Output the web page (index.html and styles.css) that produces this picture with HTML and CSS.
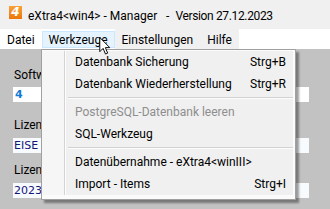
FILE: index.html
```html
<!DOCTYPE html>
<html lang="de">
<head>
<meta charset="utf-8">
<title>eXtra4 Manager</title>
<link rel="stylesheet" href="styles.css">
</head>
<body>
<div class="window">
  <div class="titlebar">
    <span class="logo">4</span>
    <span class="title">eXtra4&lt;win4&gt; - Manager   -  <span class="ver">Version 27.12.2023</span></span>
  </div>
  <div class="menubar">
    <div class="mb-item">Datei</div>
    <div class="mb-item active">Werkzeuge</div>
    <div class="mb-group">
      <div class="mb-item">Einstellungen</div>
      <div class="mb-item">Hilfe</div>
    </div>
  </div>
  <div class="main">
    <div class="label l1">Software</div>
    <div class="field f1"><span class="val-blue">4</span></div>
    <div class="label l2">Lizenz</div>
    <div class="field f2"><span class="val-navy">EISE</span></div>
    <div class="label l3">Lizenz</div>
    <div class="field f3"><span class="val-navy">2023</span></div>
  </div>
  <div class="dropdown">
    <div class="dd-body">
      <div class="dd-item"><span>Datenbank Sicherung</span><span>Strg+B</span></div>
      <div class="dd-item"><span>Datenbank Wiederherstellung</span><span>Strg+R</span></div>
      <div class="dd-sep"></div>
      <div class="dd-item disabled"><span>PostgreSQL-Datenbank leeren</span></div>
      <div class="dd-item"><span>SQL-Werkzeug</span></div>
      <div class="dd-sep"></div>
      <div class="dd-item"><span>Datenübernahme - eXtra4&lt;winIII&gt;</span></div>
      <div class="dd-item"><span>Import - Items</span><span>Strg+I</span></div>
    </div>
  </div>
  <svg class="cursor" viewBox="0 0 12 19" width="12" height="18">
    <path d="M0.5 0.5 L0.5 15.5 L4 12 L6.5 18 L8.8 17 L6.4 11.2 L11 11.2 Z" fill="#fff" stroke="#000" stroke-width="1" stroke-linejoin="miter"/>
  </svg>
</div>
</body>
</html>
```
FILE: styles.css
```css
html, body {
  margin: 0;
  padding: 0;
}
body {
  font-family: Roboto, "Noto Sans", sans-serif;
  font-size: 12px;
  color: #000;
}
.window {
  position: relative;
  width: 330px;
  height: 209px;
  overflow: hidden;
  background: #c2c2c2;
}
.titlebar {
  height: 29px;
  box-sizing: border-box;
  padding: 2px 0 0 9px;
  display: flex;
  align-items: center;
  background: #f0f0f0;
}
.logo {
  align-self: flex-start;
  margin-top: 4px;
  width: 13px;
  height: 13px;
  background: linear-gradient(#f8a23a, #ec7608);
  color: #fff;
  font: italic bold 12px/13px "DejaVu Sans", sans-serif;
  text-align: center;
}
.title {
  margin-left: 6px;
  white-space: pre;
  line-height: 14px;
}
.ver {
  letter-spacing: -0.35px;
}
.menubar {
  height: 20px;
  display: flex;
  background: #fff;
}
.mb-group {
  display: flex;
  background: #f0f0f0;
}
.mb-item {
  margin-top: 2px;
  height: 13px;
  padding: 2px 6px 0 6px;
  border: 1px solid transparent;
  line-height: 13px;
}
.mb-item.active {
  background: #e5f3ff;
  border-color: #cce8ff;
}
.main {
  height: 160px;
  display: flex;
  flex-direction: column;
  align-items: flex-start;
}
.label {
  padding-left: 14px;
  line-height: 15px;
  height: 15px;
}
.l1 { margin-top: 19px; }
.l2 { margin-top: 16px; }
.l3 { margin-top: 10px; }
.field {
  margin-left: 13px;
  width: 296px;
  height: 15px;
  background: #fff;
  font: 11px/15px "DejaVu Sans", sans-serif;
  padding-left: 1px;
  box-sizing: border-box;
}
.f1 { margin-top: 4px; }
.f2 { margin-top: 5px; background: #f7fbfe; }
.f3 { margin-top: 5px; background: #f7fbfe; }
.val-blue {
  color: #1479d4;
  font-weight: bold;
  padding-left: 1px;
}
.val-navy {
  color: #15157a;
}
.dropdown {
  position: absolute;
  left: 41px;
  top: 49px;
  width: 255px;
  box-sizing: border-box;
  border: 1px solid #a0a0a0;
  background: #fbfbfb;
  padding: 1px 2px 4px 0;
  box-shadow: 3px 3px 2px rgba(0, 0, 0, 0.38);
}
.dd-body {
  background: linear-gradient(to right, #f6f6f6 0 22px, #d3d3d3 22px 23px, #fdfdfd 23px 24px, #f0f0f0 24px);
}
.dd-item {
  height: 22px;
  line-height: 22px;
  padding: 0 7px 0 33px;
  display: flex;
  justify-content: space-between;
  white-space: pre;
}
.dd-item.disabled {
  color: #8e8e8e;
}
.dd-sep {
  height: 6px;
  margin-left: 26px;
  background: linear-gradient(#f0f0f0 0 2px, #d2d2d2 2px 3px, #fcfcfc 3px 4px, #f0f0f0 4px);
}
.cursor {
  position: absolute;
  left: 99px;
  top: 37px;
}
```
